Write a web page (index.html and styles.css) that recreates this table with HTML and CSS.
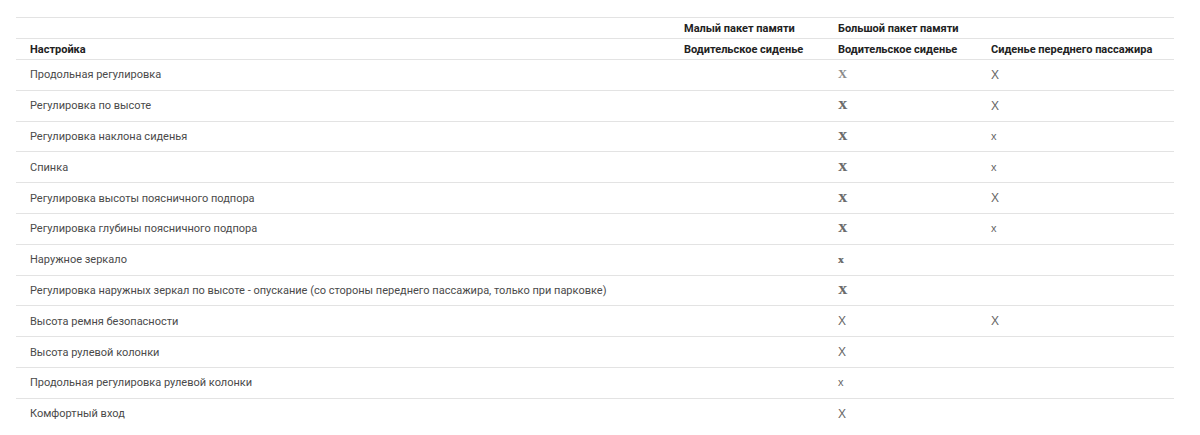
FILE: index.html
```html
<!DOCTYPE html>
<html lang="ru">
<head>
<meta charset="utf-8">
<link rel="stylesheet" href="styles.css">
</head>
<body>
<table class="spec">
  <colgroup>
    <col class="c1"><col class="c2"><col class="c3"><col class="c4">
  </colgroup>
  <thead>
    <tr class="h1">
      <th></th>
      <th>Малый пакет памяти</th>
      <th>Большой пакет памяти</th>
      <th></th>
    </tr>
    <tr class="h2">
      <th>Настройка</th>
      <th>Водительское сиденье</th>
      <th>Водительское сиденье</th>
      <th>Сиденье переднего пассажира</th>
    </tr>
  </thead>
  <tbody>
    <tr><td>Продольная регулировка</td><td></td><td><span class="xb light">X</span></td><td><span class="x">X</span></td></tr>
    <tr><td>Регулировка по высоте</td><td></td><td><span class="xb">X</span></td><td><span class="x">X</span></td></tr>
    <tr><td>Регулировка наклона сиденья</td><td></td><td><span class="xb">X</span></td><td><span class="x sm">x</span></td></tr>
    <tr><td>Спинка</td><td></td><td><span class="xb">X</span></td><td><span class="x sm">x</span></td></tr>
    <tr><td>Регулировка высоты поясничного подпора</td><td></td><td><span class="xb">X</span></td><td><span class="x">X</span></td></tr>
    <tr><td>Регулировка глубины поясничного подпора</td><td></td><td><span class="xb">X</span></td><td><span class="x sm">x</span></td></tr>
    <tr><td>Наружное зеркало</td><td></td><td><span class="xb sm">x</span></td><td></td></tr>
    <tr><td>Регулировка наружных зеркал по высоте - опускание (со стороны переднего пассажира, только при парковке)</td><td></td><td><span class="xb">X</span></td><td></td></tr>
    <tr><td>Высота ремня безопасности</td><td></td><td><span class="x">X</span></td><td><span class="x">X</span></td></tr>
    <tr><td>Высота рулевой колонки</td><td></td><td><span class="x">X</span></td><td></td></tr>
    <tr><td>Продольная регулировка рулевой колонки</td><td></td><td><span class="x sm">x</span></td><td></td></tr>
    <tr><td>Комфортный вход</td><td></td><td><span class="x">X</span></td><td></td></tr>
  </tbody>
</table>
</body>
</html>
```
FILE: styles.css
```css
html, body {
  margin: 0;
  padding: 0;
  background: #ffffff;
}
body {
  font-family: Roboto, "Liberation Sans", sans-serif;
  font-size: 11px;
  color: #4a4a4a;
}
.spec {
  margin: 17px 0 0 16px;
  width: 1158px;
  border-collapse: collapse;
  table-layout: fixed;
}
.c1 { width: 654px; }
.c2 { width: 154px; }
.c3 { width: 153px; }
.c4 { width: 197px; }
.spec th, .spec td {
  text-align: left;
  padding: 0 0 0 14px;
  border-top: 1px solid #e3e3e3;
  white-space: nowrap;
  vertical-align: middle;
}
.spec th {
  font-weight: 700;
  color: #222222;
  height: 20px;
  font-size: 11px;
}
.spec tbody td {
  height: 29.8px;
}
.x {
  font-family: "Liberation Sans", sans-serif;
  color: #666666;
  font-size: 12px;
}
.xb {
  font-family: "Liberation Serif", serif;
  font-weight: 700;
  color: #6a6a6a;
  font-size: 12.5px;
  text-shadow: 0.6px 0 0 #8a8a8a;
}
.xb.light {
  color: #8a8a8a;
  text-shadow: none;
}
.sm {
  font-size: 11px;
}
```
